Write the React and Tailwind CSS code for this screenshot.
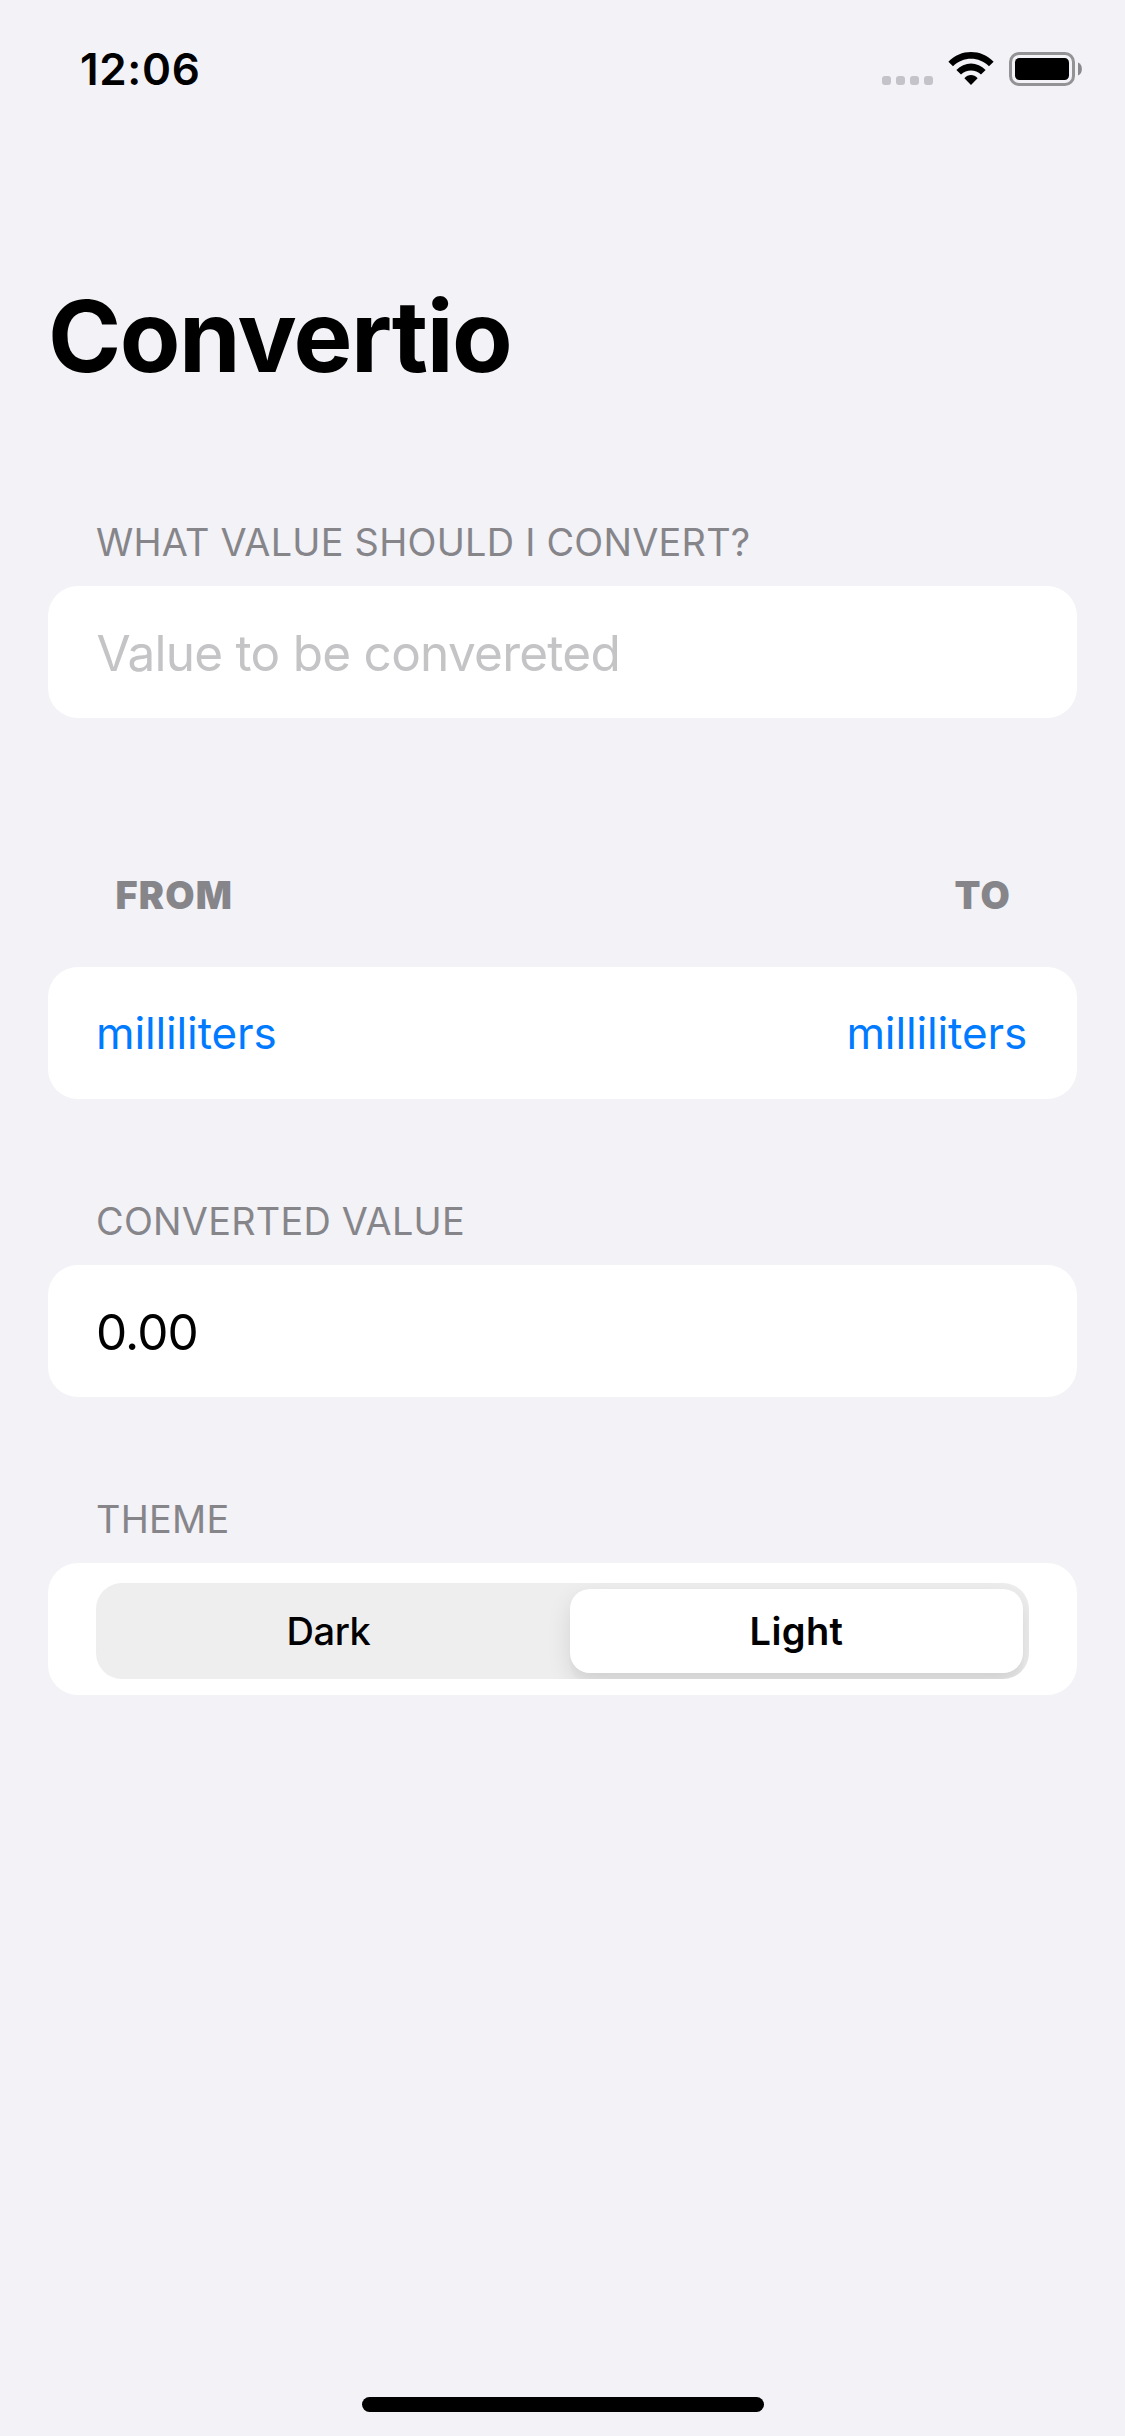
import React, { useState } from "react";

function StatusBar() {
  return (
    <header className="flex h-[138px] shrink-0 items-start pl-[80px] pr-[42px] pt-[47px]">
      <span className="text-[44px] leading-[44px] font-semibold tracking-[0.65px]">12:06</span>
      <div className="ml-auto flex pt-[5px]">
        <div className="mt-[24px] flex gap-[5px]">
          <span className="size-[9px] rounded-[3px] bg-[#c4c3c9]" />
          <span className="size-[9px] rounded-[3px] bg-[#c4c3c9]" />
          <span className="size-[9px] rounded-[3px] bg-[#c4c3c9]" />
          <span className="size-[9px] rounded-[3px] bg-[#c4c3c9]" />
        </div>
        <svg className="ml-[15px] h-[34px] w-[46px]" viewBox="0 0 46 34">
          <path d="M0.4 9.7 C12.8 -3.2 33.2 -3.2 45.6 9.7 L41 14.3 C31.2 4.2 14.8 4.2 5 14.3 Z" />
          <path d="M8.4 18 C16.4 9.3 29.6 9.3 37.6 18 L33 22.6 C27.6 17 18.4 17 13 22.6 Z" />
          <path d="M16.4 26.2 C20.2 22 25.8 22 29.6 26.2 L23 33 Z" />
        </svg>
        <svg className="ml-[15px] h-[34px] w-[74px]" viewBox="0 0 74 34">
          <rect x="1.5" y="1.5" width="63" height="31" rx="8.5" fill="none" stroke="#939295" strokeWidth="3" />
          <rect x="6" y="6" width="54" height="22" rx="4.5" />
          <path d="M69 10.5 C74.2 12.6 74.2 21.4 69 23.5 Z" fill="#89888b" />
        </svg>
      </div>
    </header>
  );
}

function SectionLabel({ children }) {
  return (
    <h2 className="mb-[24px] h-[40px] pl-[48px] text-[37.8px] leading-[40px] tracking-[0.27px] text-[#86858a]">
      {children}
    </h2>
  );
}

function Card({ className = "", children }) {
  return (
    <div className={`flex h-[132px] items-center rounded-[30px] bg-white px-[48px] ${className}`}>
      {children}
    </div>
  );
}

export default function App() {
  const [value, setValue] = useState("");
  const amount = (parseFloat(value) || 0).toFixed(2);

  return (
    <div className="flex h-[2436px] w-[1125px] flex-col overflow-hidden bg-[#f2f2f7] font-['Inter','Liberation_Sans',sans-serif] text-black">
      <StatusBar />
      <main className="flex flex-1 flex-col px-[48px] pt-[148px]">
        <h1 className="mb-[136px] text-[99px] leading-[100px] font-bold tracking-[-1.47px]">Convertio</h1>

        <section>
          <SectionLabel>WHAT VALUE SHOULD I CONVERT?</SectionLabel>
          <Card>
            <input
              className="mt-[2px] h-[80px] w-full bg-transparent p-0 pl-[0.5px] text-[49.5px] tracking-[-0.73px] outline-none placeholder:text-[#c4c4c6]"
              placeholder="Value to be convereted"
              value={value}
              onChange={(e) => setValue(e.target.value)}
            />
          </Card>
        </section>

        <section className="mt-[157px]">
          <div className="mb-[52px] flex h-[40px] justify-between pl-[67.5px] pr-[66px] text-[37.8px] leading-[40px] font-black tracking-[1.2px] text-[#86858a]">
            <h2>FROM</h2>
            <h2>TO</h2>
          </div>
          <Card className="justify-between text-[44px] leading-[52px] tracking-[-0.12px] text-[#007aff]">
            <button>milliliters</button>
            <button className="mr-[2px]">milliliters</button>
          </Card>
        </section>

        <section className="mt-[102px]">
          <SectionLabel>CONVERTED VALUE</SectionLabel>
          <Card>
            <span className="mt-[2px] text-[49.5px] leading-[60px] tracking-[-0.9px]">{amount}</span>
          </Card>
        </section>

        <section className="mt-[102px]">
          <SectionLabel>THEME</SectionLabel>
          <Card>
            <div className="mt-[4px] flex h-[96px] w-full overflow-hidden rounded-[26px] bg-[#eeeeee] py-[6px] pr-[6px] text-[38px]">
              <button className="w-[465px] font-medium tracking-[-0.4px]">Dark</button>
              <button className="ml-[9px] flex-1 rounded-[20px] bg-white font-semibold tracking-[0.4px] shadow-[0_9px_24px_rgba(0,0,0,0.11),0_9px_3px_rgba(0,0,0,0.025)]">
                Light
              </button>
            </div>
          </Card>
        </section>
      </main>
      <footer className="flex shrink-0 justify-center pb-[24px]">
        <div className="h-[15px] w-[402px] rounded-full bg-black" />
      </footer>
    </div>
  );
}
